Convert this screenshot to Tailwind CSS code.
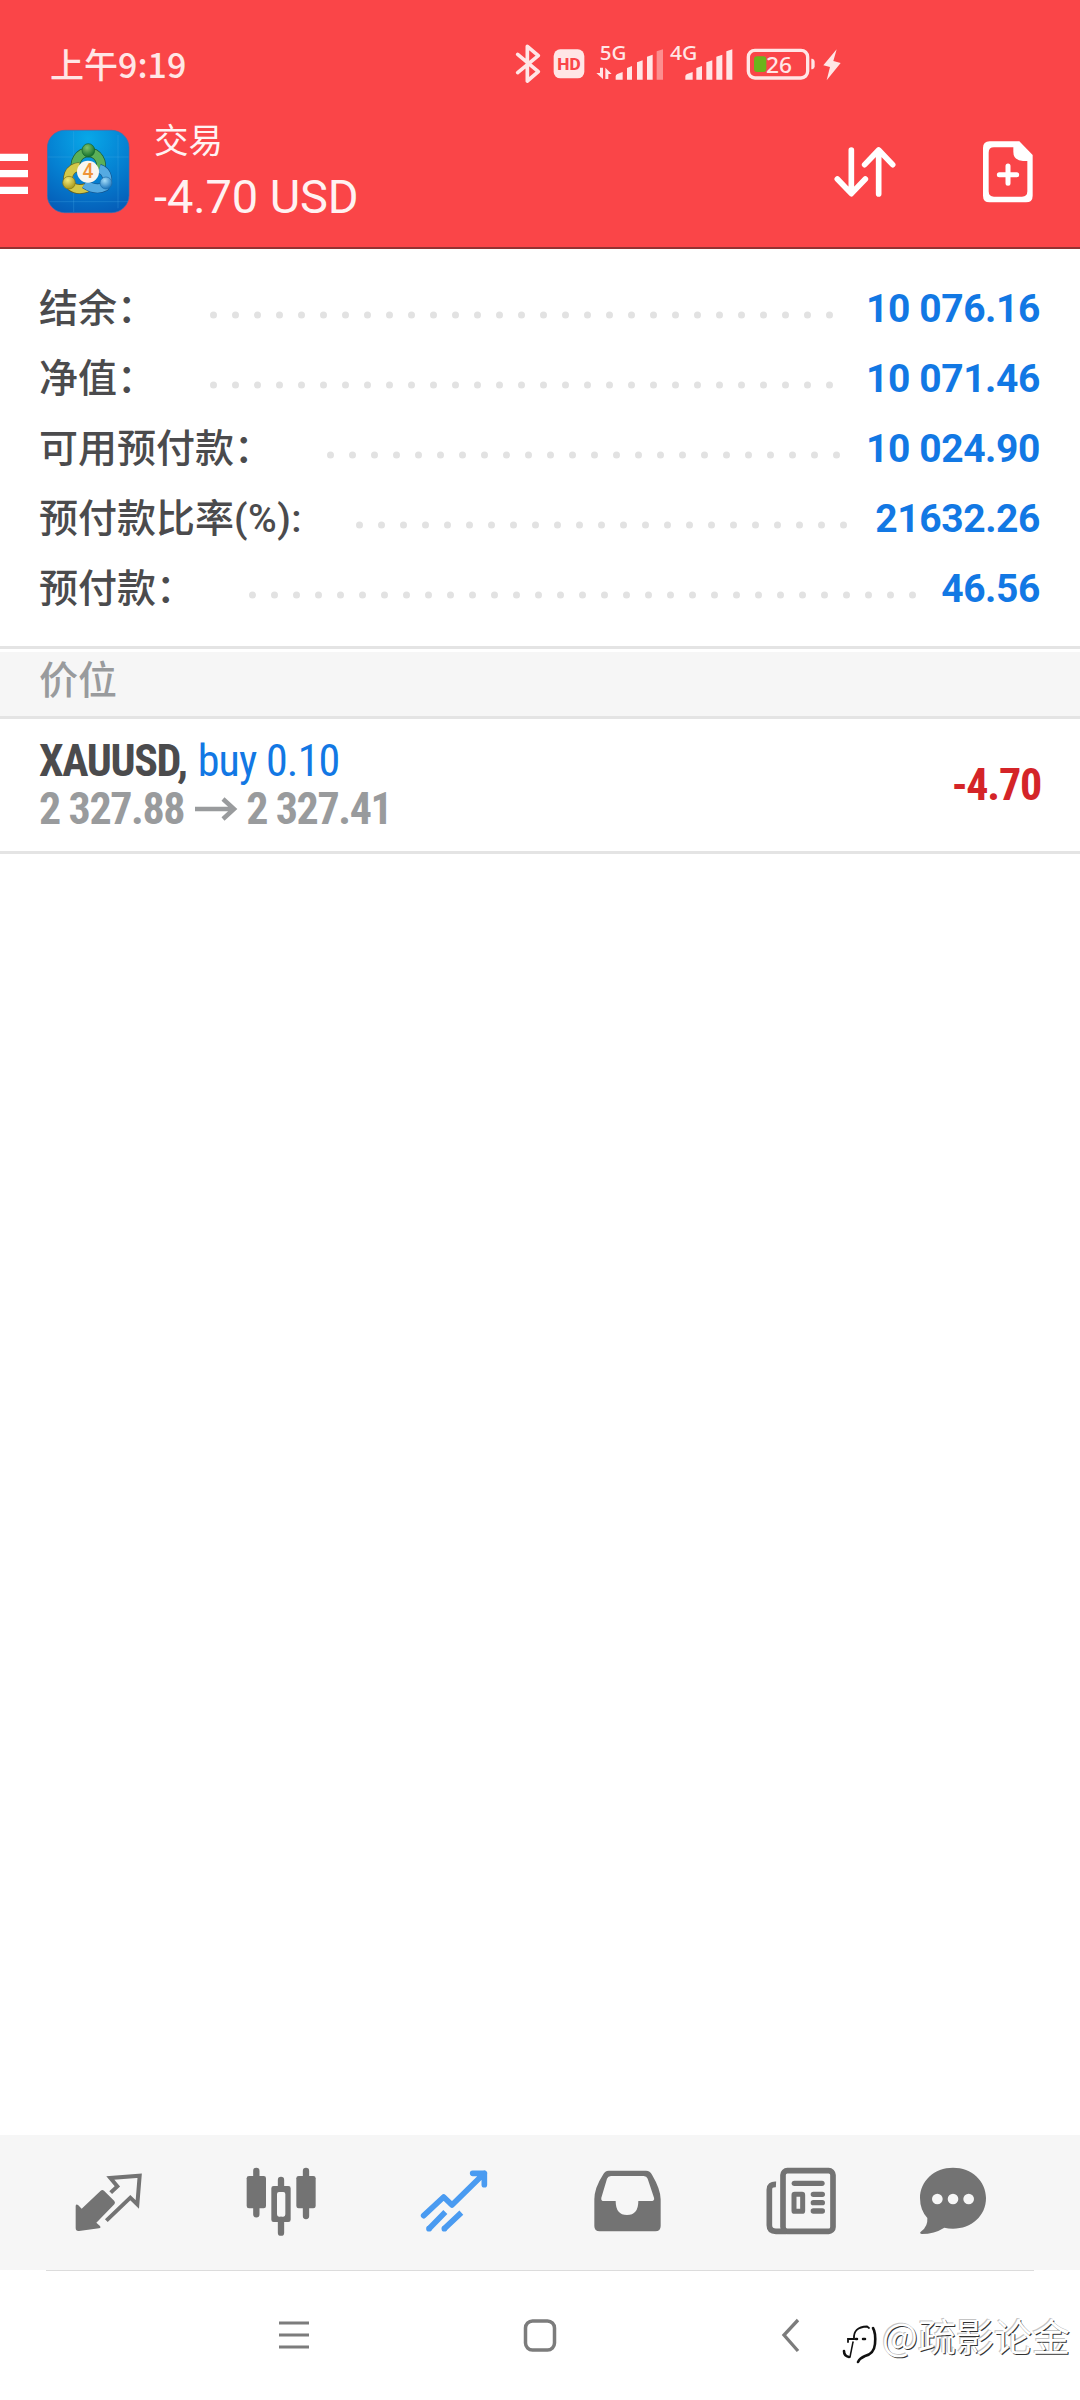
<!DOCTYPE html>
<html lang="zh-CN">
<head>
<meta charset="utf-8">
<title>交易</title>
<script src="https://cdn.jsdelivr.net/npm/@tailwindcss/browser@4"></script>
</head>
<body class="relative flex h-[2400px] w-[1080px] flex-col overflow-hidden bg-white font-['Roboto','Noto_Sans_CJK_SC',sans-serif]">

<header class="h-[249px] shrink-0 border-b-2 border-[#923232] bg-[#fa4548] text-white">
  <div class="flex h-[110px] items-center pl-[50px]">
    <div class="w-[460px] pt-[17px] font-['Noto_Sans_CJK_SC',sans-serif] text-[34px] leading-[50px] font-medium whitespace-nowrap text-[#ffe6e6]">上午9:19</div>
    <!-- bluetooth -->
    <svg class="h-[110px] w-[37px] shrink-0" viewBox="30 -90 111 330" fill="none" stroke="#ffe6e6" stroke-width="11" stroke-linejoin="round" stroke-linecap="round"><path d="M53 73 115 125 82 153V49L115 77 53 128"/></svg>
    <!-- HD -->
    <svg class="h-[110px] w-[43px] shrink-0" viewBox="141 -90 129 330"><rect x="161" y="58" width="92" height="87" rx="20" fill="#ffe6e6"/><text x="207" y="119" text-anchor="middle" font-family="Roboto" font-weight="800" font-size="50" textLength="70" lengthAdjust="spacingAndGlyphs" fill="#fa4548">HD</text></svg>
    <!-- 5G signal -->
    <svg class="h-[110px] w-[77px] shrink-0" viewBox="270 -90 231 330" fill="#ffe6e6"><text x="299" y="90" font-family="Noto Sans" font-weight="500" font-size="58" textLength="80" lengthAdjust="spacingAndGlyphs">5G</text><path d="M300 113h9v34l-20-18h11zM316 147v-34l19 19h-10v15zM347 149v-10q0-5 5-7l16-6v23zM381 114l15-6v41h-15zM411 97l17-6v58h-17zM441 80l17-6v75h-17z"/><path opacity=".45" d="M470 64l19-6v91h-19z"/></svg>
    <!-- 4G signal -->
    <svg class="h-[110px] w-[75px] shrink-0" viewBox="501 -90 225 330" fill="#ffe6e6"><text x="510" y="90" font-family="Noto Sans" font-weight="500" font-size="58" textLength="82" lengthAdjust="spacingAndGlyphs">4G</text><path d="M556 149v-10q0-5 5-7l17-6v23zM589 114l17-6v41h-17zM619 97l18-6v58h-18zM649 80l18-6v75h-18zM679 64l18-6v91h-18z"/></svg>
    <!-- battery -->
    <svg class="h-[110px] w-[75px] shrink-0" viewBox="726 -90 225 330"><rect x="745" y="61" width="178" height="83" rx="20" fill="none" stroke="#ffe6e6" stroke-width="10"/><path d="M934 86h3q7 2 7 9v14q0 7-7 9h-3z" fill="#ffe6e6"/><rect x="762" y="79" width="37" height="47" rx="9" fill="#6cb41c"/><text x="798" y="128" font-family="Noto Sans" font-weight="500" font-size="66" textLength="78" lengthAdjust="spacingAndGlyphs" fill="#ffe6e6">26</text></svg>
    <!-- charging -->
    <svg class="h-[110px] w-[30px] shrink-0" viewBox="951 -90 90 330" fill="#ffe6e6"><path d="M1010 58 970 106l20 5-10 40 42-52-22-6z"/></svg>
  </div>

  <div class="flex h-[137px]">
    <svg class="h-[137px] w-[47px] shrink-0" viewBox="0 270 141 411" fill="#fff"><path d="M0 401h84v22H0zM0 450h84v22H0zM0 500h84v22H0z"/></svg>
    <svg class="h-[137px] w-[83px] shrink-0" viewBox="141 270 249 411">
      <defs>
        <radialGradient id="sky" cx=".5" cy=".1" r="1"><stop offset="0" stop-color="#08a8e8"/><stop offset=".5" stop-color="#0581d2"/><stop offset="1" stop-color="#0558b4"/></radialGradient>
        <radialGradient id="gr" cx=".4" cy=".3" r=".7"><stop offset="0" stop-color="#7fc26c"/><stop offset="1" stop-color="#12702c"/></radialGradient>
        <radialGradient id="ye" cx=".4" cy=".3" r=".7"><stop offset="0" stop-color="#f2ea7c"/><stop offset="1" stop-color="#a8971a"/></radialGradient>
        <radialGradient id="bl" cx=".4" cy=".3" r=".7"><stop offset="0" stop-color="#a4dcf8"/><stop offset="1" stop-color="#1b75bd"/></radialGradient>
      </defs>
      <rect x="142" y="331" width="245" height="247" rx="52" fill="url(#sky)" stroke="#3d70b0" stroke-width="2"/>
      <path d="M221 334v242M354 345v220M144 411h242M148 545h236" stroke="#4fb4ea" stroke-opacity=".4" stroke-width="2" fill="none"/>
      <g fill="none">
        <path d="M231 452a38 38 0 1 1 68 0" stroke="#1c5c38" stroke-width="29"/>
        <path d="M231 452a38 38 0 1 1 68 0" stroke="#5bb058" stroke-width="25"/>
        <path d="M238 441a34 34 0 0 0-24 58q18 14 48 4" stroke="#655f20" stroke-width="29"/>
        <path d="M238 441a34 34 0 0 0-24 58q18 14 48 4" stroke="#d2c84a" stroke-width="25"/>
        <path d="M298 446a34 34 0 0 1 16 54q-26 14-60-8" stroke="#12548f" stroke-width="29"/>
        <path d="M298 446a34 34 0 0 1 16 54q-26 14-60-8" stroke="#55aae2" stroke-width="25"/>
      </g>
      <ellipse cx="265" cy="391" rx="19" ry="20" fill="url(#gr)" stroke="#14612c" stroke-width="2"/>
      <circle cx="207" cy="488" r="19" fill="url(#ye)" stroke="#7d7218" stroke-width="2"/>
      <circle cx="318" cy="489" r="18" fill="url(#bl)" stroke="#1f6cab" stroke-width="2"/>
      <circle cx="264" cy="455" r="33" fill="#f8f5ef"/>
      <text x="264" y="475" text-anchor="middle" font-family="Roboto" font-weight="500" font-size="58" fill="#ee9337">4</text>
    </svg>
    <div class="flex grow flex-col pl-[24px] whitespace-nowrap text-[#fff2f2]">
      <div class="mt-[6px] h-[50px] text-[34.5px] leading-[50px]">交易</div>
      <div class="mt-[2px] h-[56px] text-[47px] leading-[58px] tracking-[-0.1px]">-4.70 USD</div>
    </div>
    <svg class="h-[137px] w-[160px] shrink-0" viewBox="0 -30 480 411" fill="none" stroke="#fff" stroke-width="17" stroke-linecap="round" stroke-linejoin="round"><path d="M154 90V220M112 177 154 221 196 177M236 222V92M194 134 236 90 278 134"/></svg>
    <svg class="h-[137px] w-[120px] shrink-0" viewBox="480 -30 360 411" fill="#fff"><path fill-rule="evenodd" d="M569 64h89l40 41v122q0 20-20 20H569q-20 0-20-20V84q0-20 20-20zM582 82q-16 0-16 16v116q0 16 16 16h84q16 0 16-16v-91h-13q-29-2-29-28V82z"/><path d="M624 138v52M598 164h52" stroke="#fff" stroke-width="15" stroke-linecap="round"/></svg>
  </div>
</header>

<main class="flex grow flex-col">
  <section class="flex h-[397px] shrink-0 flex-col pt-[24px] pr-[40px] pl-[39px] text-[39px] leading-[72px] font-medium whitespace-nowrap text-[#4b4b4d]">
    <div class="flex h-[70px]"><span class="w-[171px]">结余：</span><svg class="mt-[38px] h-[8px] w-[623px]"><path d="M3.5 4H623" stroke="#e2e2e2" stroke-width="7" stroke-linecap="round" stroke-dasharray="0 22"/></svg><b class="grow text-right font-bold tracking-[-0.4px] text-[#1278e4]">10 076.16</b></div>
    <div class="flex h-[70px]"><span class="w-[171px]">净值：</span><svg class="mt-[38px] h-[8px] w-[623px]"><path d="M3.5 4H623" stroke="#e2e2e2" stroke-width="7" stroke-linecap="round" stroke-dasharray="0 22"/></svg><b class="grow text-right font-bold tracking-[-0.4px] text-[#1278e4]">10 071.46</b></div>
    <div class="flex h-[70px]"><span class="w-[288px]">可用预付款：</span><svg class="mt-[38px] h-[8px] w-[513px]"><path d="M3.5 4H513" stroke="#e2e2e2" stroke-width="7" stroke-linecap="round" stroke-dasharray="0 22"/></svg><b class="grow text-right font-bold tracking-[-0.4px] text-[#1278e4]">10 024.90</b></div>
    <div class="flex h-[70px]"><span class="w-[317px]">预付款比率<span class="tracking-[0.5px]">(%):</span></span><svg class="mt-[38px] h-[8px] w-[491px]"><path d="M3.5 4H491" stroke="#e2e2e2" stroke-width="7" stroke-linecap="round" stroke-dasharray="0 22"/></svg><b class="grow text-right font-bold tracking-[-0.4px] text-[#1278e4]">21632.26</b></div>
    <div class="flex h-[70px]"><span class="w-[210px]">预付款：</span><svg class="mt-[38px] h-[8px] w-[667px]"><path d="M3.5 4H667" stroke="#e2e2e2" stroke-width="7" stroke-linecap="round" stroke-dasharray="0 22"/></svg><b class="grow text-right font-bold tracking-[-0.4px] text-[#1278e4]">46.56</b></div>
  </section>

  <div class="h-[6px] shrink-0 border-t-3 border-[#e4e4e4]"></div>
  <h2 class="h-[67px] shrink-0 border-b-3 border-[#e4e4e4] bg-[#f6f6f6] pl-[39px] text-[39px] leading-[58px] font-medium text-[#999b9d]">价位</h2>

  <section class="flex h-[135px] shrink-0 items-center justify-between border-b-3 border-[#e4e4e4] pr-[39px] pl-[39px] text-[44px] leading-[48px] font-bold tracking-[-1.4px] whitespace-nowrap [font-stretch:75%]">
    <div>
      <div class="flex h-[48px] gap-[11px] text-[#4b4b4d]"><span>XAUUSD,</span><span class="font-normal tracking-[-0.8px] text-[#1278e4]">buy 0.10</span></div>
      <div class="flex h-[48px] items-center text-[#999b9d]"><span>2 327.88</span><svg class="mr-[8px] mb-[1px] ml-[11px] h-[24px] w-[43px]" viewBox="0 0 43 24" fill="none" stroke="#999b9d" stroke-width="4.500"><path d="M0 12H40M28 2 39 12 28 22"/></svg><span>2 327.41</span></div>
    </div>
    <div class="tracking-[-1.2px] text-[#d42428]">-4.70</div>
  </section>
</main>

<nav class="flex h-[135px] shrink-0 bg-[#f6f6f6] pl-[22px]">
  <svg class="h-[135px] w-[173px]" viewBox="66 45 519 405" fill="#737373"><path d="M302 212q5-4 10 0l31 31q4 5 0 10l-54 55 11 10q4 6-3 7l-60 8q-10 1-10-9v-67q2-6 8-1l10 10z"/><path d="M332 218 352 199 331 174 419 167 412 253 391 233 319 302" fill="none" stroke="#737373" stroke-width="12" stroke-linejoin="miter"/></svg>
  <svg class="h-[135px] w-[173px]" viewBox="585 45 519 405" fill="#737373"><path d="M769 153V283M918 153V288M843 180v24M843 300v38" stroke="#737373" stroke-width="19" stroke-linecap="round"/><rect x="740" y="168" width="58" height="97" rx="7"/><rect x="889" y="168" width="58" height="97" rx="7"/><path fill-rule="evenodd" d="M821 198h44q7 0 7 7v94q0 7-7 7h-44q-7 0-7-7v-94q0-7 7-7zM837 216q-6 0-6 6v61q0 7 6 7h13q6 0 6-7v-61q0-6-6-6z"/></svg>
  <svg class="h-[135px] w-[173px]" viewBox="24 45 519 405" fill="none" stroke="#4a9bf1" stroke-width="17" stroke-linejoin="round"><path d="M191 287 251 231 276 255 373 160M338 160H373V194" stroke-linecap="round"/><path d="M256 276 207 326M304 278 253 326"/><g fill="#4a9bf1" stroke="none"><circle cx="207" cy="326" r="8.500"/><circle cx="253" cy="326" r="8.500"/></g></svg>
  <svg class="h-[135px] w-[173px]" viewBox="543 45 519 405" fill="#737373"><path fill-rule="evenodd" d="M746 152h112q12 0 18 12 26 44 26 74v80q0 16-16 16H719q-16 0-16-16v-80q0-34 26-74 6-12 17-12zM753 168q-9 0-12 8l-17 57q-2 10 8 10h35q0 42 34 42t34-42h37q13 0 10-10l-19-57q-3-8-12-8z"/></svg>
  <svg class="h-[135px] w-[173px]" viewBox="-18 45 519 405" fill="none" stroke="#737373"><rect x="189" y="152" width="150" height="182" rx="13" stroke-width="17"/><path d="M168 193q-20-1-20 16V316q0 18 20 18H200" stroke-width="17"/><path d="M223 190H306" stroke-width="16" stroke-linecap="round"/><rect x="222" y="223" width="26" height="51" rx="2" stroke-width="15"/><path d="M280 223H307M280 248H307M280 273H307" stroke-width="16" stroke-linecap="round"/></svg>
  <svg class="h-[135px] w-[173px]" viewBox="501 45 519 405" fill="#737373"><path d="M699 143c56 0 99 40 99 91 0 54-44 92-99 92q-14 0-26-3-30 19-68 19-9-2-1-8 20-15 18-40-22-24-22-60c0-51 43-91 99-91z"/><g fill="#f6f6f6"><circle cx="652" cy="237" r="16"/><circle cx="699" cy="237" r="16"/><circle cx="746" cy="237" r="16"/></g></svg>
</nav>

<footer class="flex h-[130px] shrink-0 flex-col">
  <div class="mr-[46px] ml-[46px] h-px shrink-0 bg-[#dcdcdc]"></div>
  <div class="flex grow pt-[47px]">
    <svg class="ml-[278px] h-[36px] w-[32px]" viewBox="0 0 32 36" stroke="#7c7c7c" stroke-width="3"><path d="M1 5H31M1 17H31M1 29H31"/></svg>
    <svg class="ml-[212px] h-[36px] w-[36px]" viewBox="0 0 36 36" fill="none" stroke="#7c7c7c" stroke-width="3.500"><rect x="3.500" y="3" width="29" height="29" rx="7"/></svg>
    <svg class="ml-[222px] h-[36px] w-[22px]" viewBox="0 0 22 36" fill="none" stroke="#7c7c7c" stroke-width="3.300"><path d="M18 2 4 17 18 33"/></svg>
  </div>
</footer>

<!-- author mark -->
<div class="absolute top-[2308px] left-[840px] flex text-white">
  <svg class="mt-[15px] h-[42px] w-[42px]" viewBox="0 0 42 42" fill="none" stroke="#111" stroke-linecap="round"><path d="M8 19V16H14Q13 4 27 3.500L29 5" stroke-width="1.800"/><path d="M33 5Q36 10 35 21 34 31 25 33 20 35 18 39M4 28Q4 33 9 34" stroke-width="2.600"/><path d="M10 34 13 19" stroke-width="1.500"/><path d="M16 16h1M23 16h2" stroke-width="2.500"/></svg>
  <div class="font-['Noto_Sans_CJK_SC',sans-serif] text-[38px] leading-[54px] whitespace-nowrap [text-shadow:1px_1px_0_#333,-1px_-1px_0_#c4c4c4]">@疏影论金</div>
</div>
</body>
</html>
